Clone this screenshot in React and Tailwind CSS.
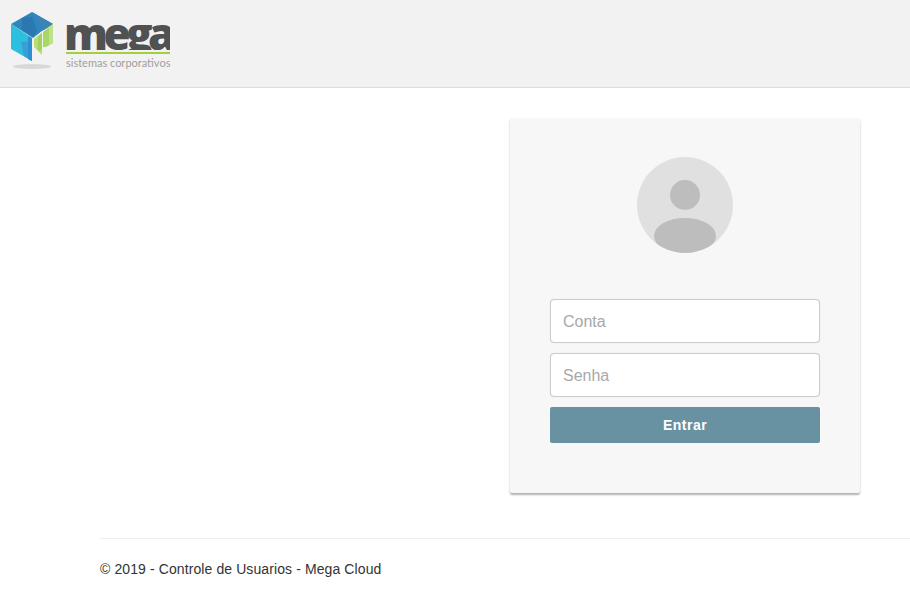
import React from 'react';

function LogoMark() {
  return (
    <svg width="44" height="50" viewBox="10 12 44 50" className="block">
      {/* top face */}
      <polygon points="32,12 53,24 42,31 33,38 11,24" fill="#2f86bd" />
      <polygon points="32,12 53,24 44,30 36,19" fill="#3b85b6" />
      <polygon points="22,18 32,17 37,31 33,37 22,30" fill="#2b78b0" />
      {/* left face */}
      <polygon points="11,24 32,38 32,61 11,49" fill="#2cbfe0" />
      <polygon points="21,42 32,41 32,61 24,56" fill="#3a9fd3" />
      <polygon points="28,36 32,38 32,61 28,59" fill="#2b90d0" />
      {/* green faces */}
      <polygon points="34,39 42,33 42,55 34,47" fill="#b8de70" />
      <polygon points="38,36 42,33 42,50 38,51" fill="#a3d260" />
      <polygon points="43,32 53,24 53,43 46,47 43,47" fill="#a9d765" />
      <polygon points="49,27 53,24 53,43 49,45" fill="#bde28a" />
    </svg>
  );
}

export default function App() {
  return (
    <div className="min-h-[601px] bg-white font-['Liberation_Sans',Arial,sans-serif]">
      {/* Header */}
      <div className="h-[88px] bg-[#f2f2f2] border-b border-[#dcdcdc] flex items-start pl-[10px] pt-[12px]">
        <div className="flex flex-col items-center w-[44px]">
          <LogoMark />
          <div className="w-[38px] h-[5px] mt-[2px] rounded-[50%] bg-[#d8d8d8]"></div>
        </div>
        <div className="flex flex-col ml-[12px] w-[104px]">
          <div className="h-[29px] mt-[9px] overflow-hidden">
            <span className="block -ml-[2px] text-[44px] leading-[24px] whitespace-nowrap font-extrabold text-[#505153] tracking-[-4.6px] font-['Open_Sans',sans-serif]">
              mega
            </span>
          </div>
          <div className="h-[2px] bg-[#a5cf3c] mt-[2px]"></div>
          <span className="text-[11px] leading-[12px] text-[#a0a0a0] mt-[3px] whitespace-nowrap font-['Lato',sans-serif]">
            sistemas corporativos
          </span>
        </div>
      </div>

      {/* Login card */}
      <div className="flex justify-end pr-[50px] pt-[30px]">
        <div className="w-[350px] h-[375px] bg-[#f7f7f7] rounded-[2px] shadow-[0_2px_2px_rgba(0,0,0,0.3)] px-10 pt-[39px]">
          <div className="relative w-24 h-24 mx-auto rounded-full bg-[#e0e0e0] overflow-hidden">
            <div className="absolute left-[33px] top-[23px] w-[30px] h-[30px] rounded-full bg-[#bdbdbd]"></div>
            <div className="absolute left-[17px] top-[61px] w-[62px] h-[36px] rounded-[50%] bg-[#bdbdbd]"></div>
          </div>
          <input
            placeholder="Conta"
            className="mt-[46px] block w-full h-[44px] bg-white border border-[#cccccc] shadow-[0_0_1px_rgba(0,0,0,0.15)] rounded-[4px] px-3 pt-[2px] text-base outline-none placeholder:text-[#a8a8a8]"
          />
          <input
            placeholder="Senha"
            className="mt-[10px] block w-full h-[44px] bg-white border border-[#cccccc] shadow-[0_0_1px_rgba(0,0,0,0.15)] rounded-[4px] px-3 pt-[2px] text-base outline-none placeholder:text-[#a8a8a8]"
          />
          <button className="mt-[10px] block w-full h-9 bg-[#6891a2] rounded-[2px] text-white text-sm font-bold tracking-[0.5px]">
            Entrar
          </button>
        </div>
      </div>

      {/* Footer */}
      <div className="ml-[100px] mt-[45px] border-t border-[#eeeeee] pt-[20px]">
        <p className="text-sm leading-[20px] text-[#333333] tracking-[0.1px]">© 2019 - Controle de Usuarios - Mega Cloud</p>
      </div>
    </div>
  );
}
